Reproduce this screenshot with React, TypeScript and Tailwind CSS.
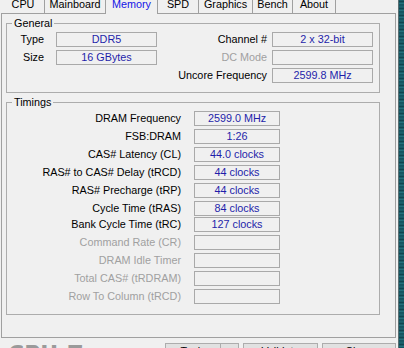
import React from 'react';

const tabs = [
  { name: 'CPU', w: 'w-[43px]' },
  { name: 'Mainboard', w: 'w-[61px]' },
  { name: 'Memory', w: 'w-[52px]', active: true },
  { name: 'SPD', w: 'w-[41px]' },
  { name: 'Graphics', w: 'w-[54px]' },
  { name: 'Bench', w: 'w-[40px]' },
  { name: 'About', w: 'w-[43px]' },
];

const timings = [
  { label: 'DRAM Frequency', value: '2599.0 MHz' },
  { label: 'FSB:DRAM', value: '1:26' },
  { label: 'CAS# Latency (CL)', value: '44.0 clocks' },
  { label: 'RAS# to CAS# Delay (tRCD)', value: '44 clocks' },
  { label: 'RAS# Precharge (tRP)', value: '44 clocks' },
  { label: 'Cycle Time (tRAS)', value: '84 clocks' },
  { label: 'Bank Cycle Time (tRC)', value: '127 clocks', tight: true },
  { label: 'Command Rate (CR)', value: '', disabled: true },
  { label: 'DRAM Idle Timer', value: '', disabled: true },
  { label: 'Total CAS# (tRDRAM)', value: '', disabled: true },
  { label: 'Row To Column (tRCD)', value: '', disabled: true },
];

const field =
  'h-[15px] border border-[#a9a9a9] bg-[#f0f0f0] flex items-center justify-center text-[#1e1eaa] leading-[13px] whitespace-nowrap';

function Field({ value, w }: { value: string; w: string }) {
  return <div className={`${field} ${w}`}>{value}</div>;
}

export default function App() {
  return (
    <div className="w-[404px] h-[348px] overflow-hidden flex font-['Liberation_Sans',Arial,sans-serif] text-[10.8px] leading-[13px] text-black">
      {/* Window */}
      <div className="w-[398px] h-full bg-[#f0f0f0] flex flex-col">
        {/* Tabs */}
        <div className="shrink-0 h-[13px] flex items-end pl-[2px]">
          {tabs.map((t) => (
            <div
              key={t.name}
              className={`${t.w} border-r border-[#a0a0a0] flex justify-center ${
                t.active
                  ? 'relative z-10 h-[14px] -mb-[1px] bg-[#f0f0f0] text-[#1414e6]'
                  : 'h-[13px]'
              }`}
            >
              <span className="leading-[13px] -mt-[2px]">{t.name}</span>
            </div>
          ))}
        </div>

        {/* Tab panel */}
        <div className="shrink-0 ml-[1px] w-[395px] h-[325px] border border-[#a0a0a0] pl-[4px]">
          {/* General */}
          <fieldset className="mt-[3px] w-[374px] border border-[#acacac] pt-[2px] pb-[9px]">
            <legend className="ml-[5px] px-[2px] leading-[13px]">General</legend>
            <div className="flex flex-col gap-[3px]">
              <div className="flex items-center">
                <div className="w-[37px] text-right">Type</div>
                <div className="ml-[12px]">
                  <Field value="DDR5" w="w-[101px]" />
                </div>
                <div className="flex-1 text-right">Channel #</div>
                <div className="ml-[5px] mr-[6px]">
                  <Field value="2 x 32-bit" w="w-[101px]" />
                </div>
              </div>
              <div className="flex items-center">
                <div className="w-[37px] text-right">Size</div>
                <div className="ml-[12px]">
                  <Field value="16 GBytes" w="w-[101px]" />
                </div>
                <div className="flex-1 text-right text-[#a0a0a0]">DC Mode</div>
                <div className="ml-[5px] mr-[6px]">
                  <Field value="" w="w-[101px]" />
                </div>
              </div>
              <div className="flex items-center">
                <div className="flex-1 text-right">Uncore Frequency</div>
                <div className="ml-[5px] mr-[6px]">
                  <Field value="2599.8 MHz" w="w-[101px]" />
                </div>
              </div>
            </div>
          </fieldset>

          {/* Timings */}
          <fieldset className="mt-[3px] w-[374px] border border-[#acacac] pt-[2px] pb-[10px]">
            <legend className="ml-[5px] px-[2px] leading-[13px]">Timings</legend>
            <div className="flex flex-col">
              {timings.map((r, i) => (
                <div
                  key={r.label}
                  className={`flex items-center ${i === 0 ? '' : r.tight ? 'mt-[1px]' : 'mt-[3px]'}`}
                >
                  <div
                    className={`w-[174px] text-right whitespace-nowrap ${
                      r.disabled ? 'text-[#a0a0a0]' : 'text-black'
                    }`}
                  >
                    {r.label}
                  </div>
                  <div className="ml-[13px]">
                    <Field value={r.value} w="w-[86px]" />
                  </div>
                </div>
              ))}
            </div>
          </fieldset>
        </div>

        {/* Bottom bar */}
        <div className="shrink-0 flex items-start mt-[5px]">
          <div className="ml-[8px] text-[22px] leading-[22px] font-bold text-[#9a9a9a] font-['DejaVu_Sans',sans-serif]">
            CPU-Z
          </div>
          <div className="ml-auto mr-[2px] flex gap-[4px]">
            <div className="w-[74px] h-[23px] border border-[#adadad] bg-[#e1e1e1] flex">
              <div className="w-[55px] border-r border-[#adadad] text-center leading-[13px] pt-[1px]">
                Tools
              </div>
              <div className="flex-1" />
            </div>
            <div className="w-[75px] h-[23px] border border-[#adadad] bg-[#e1e1e1] text-center leading-[13px] pt-[1px]">
              Validate
            </div>
            <div className="w-[74px] h-[23px] border border-[#adadad] bg-[#e1e1e1] text-center leading-[13px] pt-[1px]">
              Close
            </div>
          </div>
        </div>
      </div>

      {/* Desktop edge */}
      <div className="w-[6px] h-full border-l border-[#5a6e72] bg-[repeating-linear-gradient(0deg,#0e4753_0px,#2b7d89_2px,#0b3b45_3px,#1e6672_5px,#14525e_7px)]" />
    </div>
  );
}
